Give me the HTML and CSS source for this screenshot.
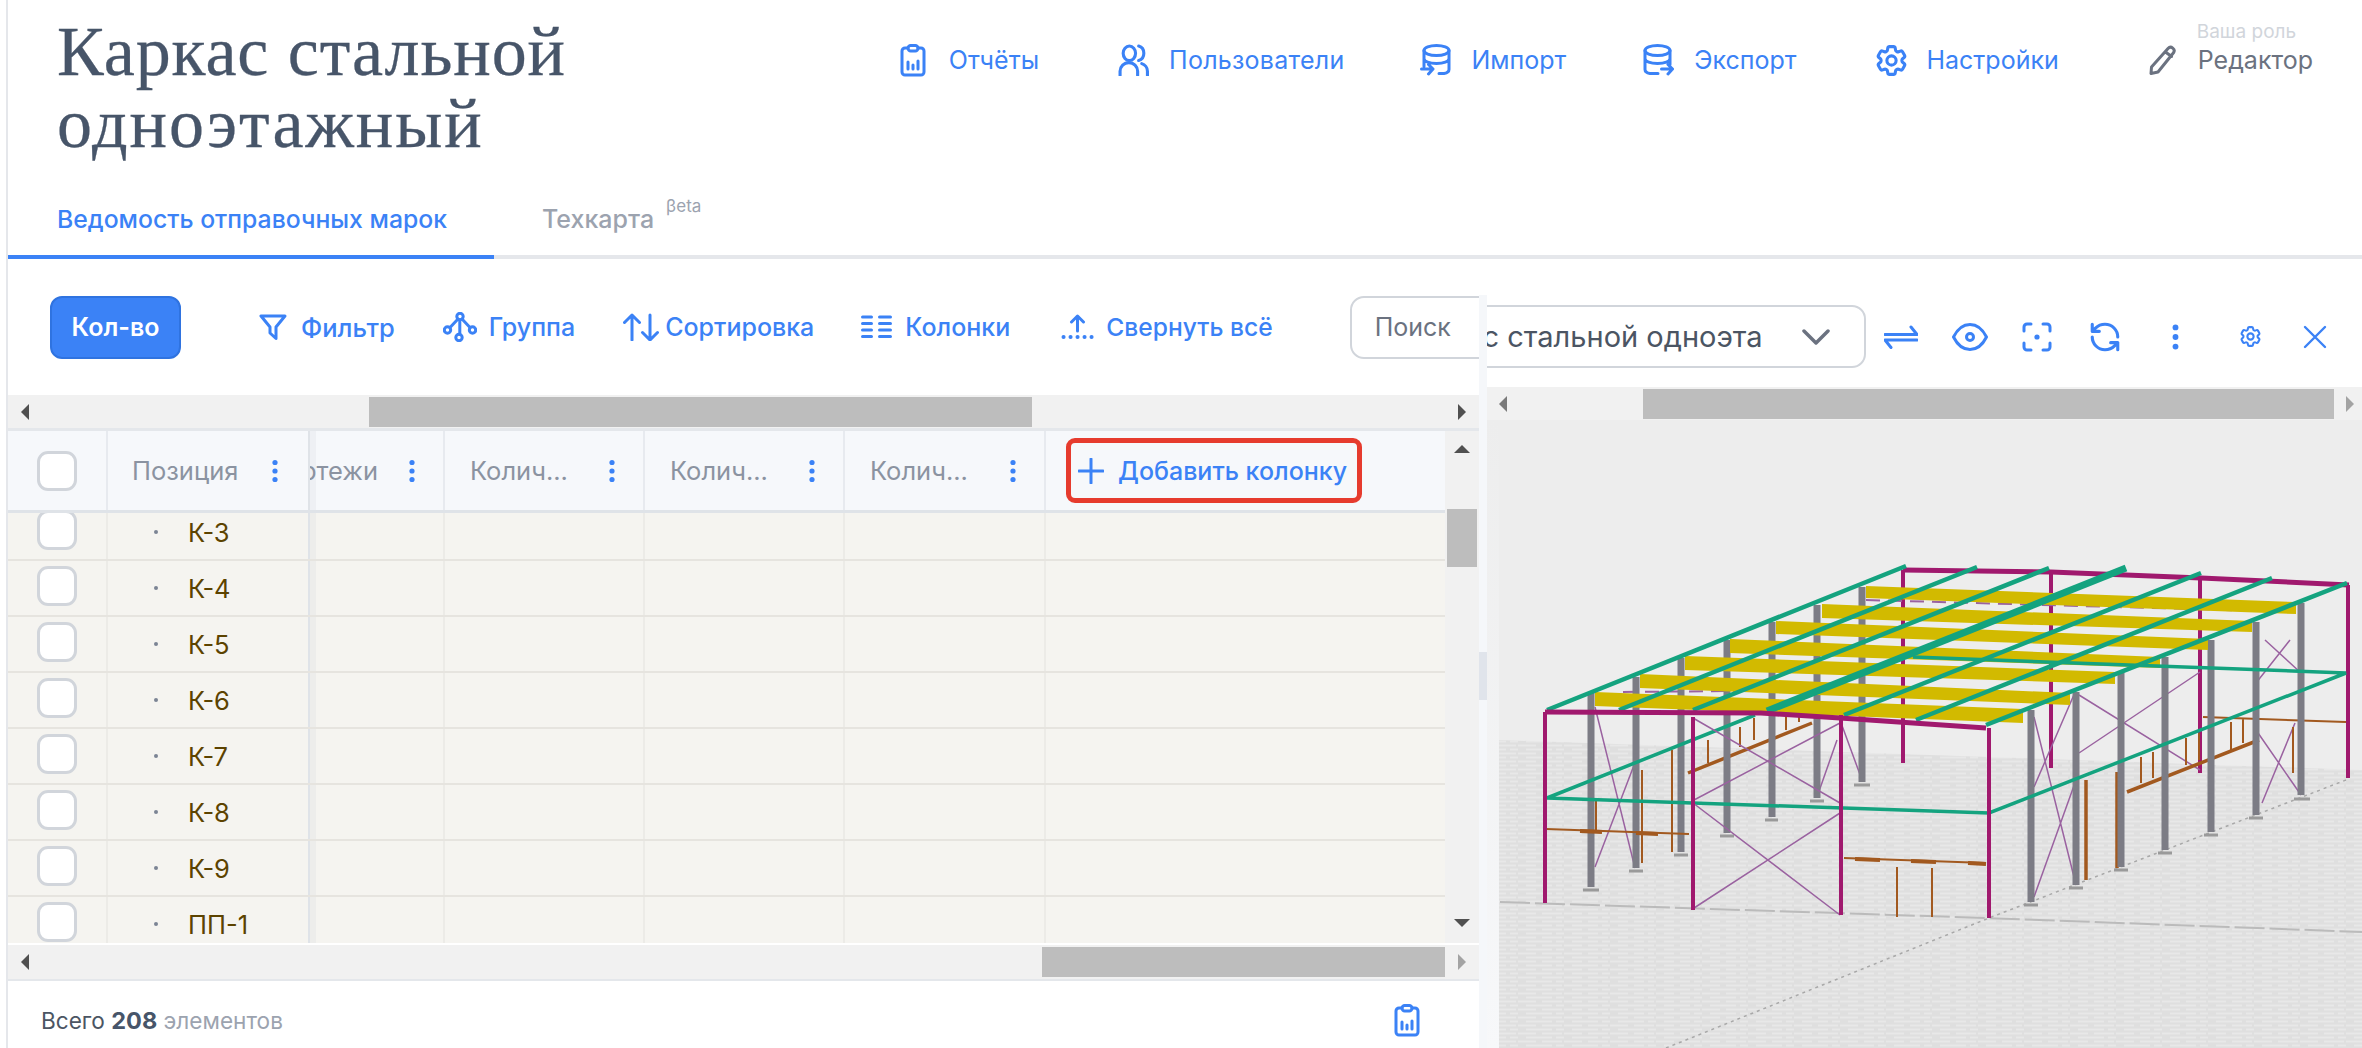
FILE: index.html
```html
<!DOCTYPE html>
<html lang="ru">
<head>
<meta charset="utf-8">
<title>Каркас стальной одноэтажный</title>
<link rel="stylesheet" href="styles.css">
</head>
<body>
<svg class="defs" width="0" height="0" aria-hidden="true">
  <symbol id="i-report" viewBox="0 0 26 33"><path d="M8 4H5a3 3 0 0 0-3 3v21a3 3 0 0 0 3 3h16a3 3 0 0 0 3-3V7a3 3 0 0 0-3-3h-3"/><rect x="8" y="1.5" width="10" height="5.5" rx="2.7"/><path d="M8 18v7M13 21v4M18 17v8"/></symbol>
  <symbol id="i-dots" viewBox="0 0 8 24"><circle cx="4" cy="3.5" r="2.6"/><circle cx="4" cy="12" r="2.6"/><circle cx="4" cy="20.5" r="2.6"/></symbol>
  <symbol id="i-gear" viewBox="0 0 24 24"><path d="M9.594 3.94c.09-.542.56-.94 1.11-.94h2.593c.55 0 1.02.398 1.11.94l.213 1.281c.063.374.313.686.645.87.074.04.147.083.22.127.324.196.72.257 1.075.124l1.217-.456a1.125 1.125 0 011.37.49l1.296 2.247a1.125 1.125 0 01-.26 1.431l-1.003.827c-.293.24-.438.613-.431.992a6.759 6.759 0 010 .255c-.007.378.138.75.43.99l1.005.828c.424.35.534.954.26 1.43l-1.298 2.247a1.125 1.125 0 01-1.369.491l-1.217-.456c-.355-.133-.75-.072-1.076.124a6.57 6.57 0 01-.22.128c-.331.183-.581.495-.644.869l-.213 1.28c-.09.543-.56.941-1.11.941h-2.594c-.55 0-1.02-.398-1.11-.94l-.213-1.281c-.062-.374-.312-.686-.644-.87a6.52 6.52 0 01-.22-.127c-.325-.196-.72-.257-1.076-.124l-1.217.456a1.125 1.125 0 01-1.369-.49l-1.297-2.247a1.125 1.125 0 01.26-1.431l1.004-.827c.292-.24.437-.613.43-.992a6.932 6.932 0 010-.255c.007-.378-.138-.75-.43-.99l-1.004-.828a1.125 1.125 0 01-.26-1.43l1.297-2.247a1.125 1.125 0 011.37-.491l1.216.456c.356.133.751.072 1.076-.124.072-.044.146-.087.22-.128.332-.183.582-.495.644-.869l.214-1.281z"/><circle cx="12" cy="12" r="3"/></symbol>
  <pattern id="floor" width="46" height="8" patternUnits="userSpaceOnUse"><rect width="46" height="8" fill="#dfdfdf"/><path d="M0 1.5h18M24 1.5h20M8 5.5h26M38 5.5h8" stroke="#e8e8e8" stroke-width="2"/></pattern>
</svg>

<div class="app">
  <header class="top">
    <h1 class="title">Каркас стальной <span class="title-line2">одноэтажный</span></h1>
    <nav class="mainnav">
      <a class="navitem nav-report"><svg class="ic ic-report"><use href="#i-report"/></svg>Отчёты</a>
      <a class="navitem nav-users"><svg class="ic ic-30" viewBox="0 0 30 30"><ellipse cx="11" cy="8.5" rx="6" ry="7"/><path d="M20 1.5c3 .8 5 3.6 5 7s-2 6.200-5 7M2 30v-4a8.500 8.500 0 0 1 17 0v4M23 18.500c3 1 5.500 4 5.500 7.500v4"/></svg>Пользователи</a>
      <a class="navitem nav-import"><svg class="ic ic-30" viewBox="0 0 30 32"><ellipse cx="16" cy="6.500" rx="12.500" ry="5"/><path d="M3.500 6.500v16M28.500 6.500v19c0 2-2 3.500-5 4h-5M3.500 14.500c0 3 5.500 5 12.500 5s12.500-2 12.500-5M1 25h11M8 20.500l4.500 4.500L8 30"/></svg>Импорт</a>
      <a class="navitem nav-export"><svg class="ic ic-30" viewBox="0 0 30 32"><ellipse cx="14" cy="6.500" rx="12.500" ry="5"/><path d="M26.500 6.500v14M1.500 6.500v19c0 2 2 3.500 5 4h8M1.500 14.500c0 3 5.500 5 12.500 5s12.500-2 12.500-5M18 25h11M24.500 20.500L29 25l-4.500 5"/></svg>Экспорт</a>
      <a class="navitem nav-settings"><svg class="ic ic-gear-lg"><use href="#i-gear"/></svg>Настройки</a>
      <div class="role">
        <svg class="ic ic-pencil" viewBox="0 0 28 30"><path d="M20 3.500a3.500 3.500 0 0 1 5.500 4.300L10 27l-7 1.500L3.500 22zM17.500 7l6 4.500"/></svg>
        <div class="role-text"><span class="role-label">Ваша роль</span><span class="role-name">Редактор</span></div>
      </div>
    </nav>
  </header>

  <div class="tabs">
    <a class="tab tab-active">Ведомость отправочных марок</a>
    <a class="tab tab-muted">Техкарта<sup class="beta">βeta</sup></a>
  </div>

  <div class="work">
    <section class="left">
      <div class="toolbar">
        <button class="primary">Кол-во</button>
        <div class="tools">
          <a class="tool tool-filter"><svg class="ic ic-filter" viewBox="0 0 28 28"><path d="M2 3h24l-9 11v11.500l-6-5.500v-6z"/></svg>Фильтр</a>
          <a class="tool"><svg class="ic ic-group" viewBox="0 0 34 30"><circle cx="17" cy="4.500" r="3.200"/><circle cx="4.500" cy="18" r="3.200"/><circle cx="29.500" cy="18" r="3.200"/><circle cx="16" cy="25.500" r="3.200"/><path d="M15 7L7 15.500M19 7l8 8.500M16.800 8v14"/></svg>Группа</a>
          <a class="tool tool-sort"><svg class="ic ic-sort" viewBox="0 0 36 28"><path d="M9 27V2M1.500 9.500L9 2l7.500 7.500M27 2v25M19.500 19.500L27 27l7.500-7.500"/></svg>Сортировка</a>
          <a class="tool"><svg class="ic ic-cols" viewBox="0 0 32 26"><path d="M2 3h9M2 9.500h9M2 16h9M2 22.500h9M19 3h11M19 9.500h11M19 16h11M19 22.500h11"/></svg>Колонки</a>
          <a class="tool tool-collapse"><svg class="ic ic-collapse" viewBox="0 0 32 26"><path d="M16 17V2M10 8l6-6 6 6"/><path class="dotrow" d="M2 23h.1M9 23h.1M16 23h.1M23 23h.1M30 23h.1"/></svg>Свернуть всё</a>
        </div>
        <div class="search">Поиск</div>
      </div>

      <div class="hbar hbar-top"><i class="arr arr-l"></i><div class="hspace hspace-a"></div><div class="hthumb hthumb-a"></div><div class="hspace"></div><i class="arr arr-r"></i></div>

      <div class="gridwrap">
        <div class="tbl">
          <div class="row head">
            <div class="cell cell-check"><span class="check"></span></div>
            <div class="cell cell-pos"><span class="hlabel">Позиция</span><svg class="kebab"><use href="#i-dots"/></svg></div>
            <div class="cell cell-clip"><span class="hlabel">Чертежи</span><svg class="kebab"><use href="#i-dots"/></svg></div>
            <div class="cell"><span class="hlabel">Колич...</span><svg class="kebab"><use href="#i-dots"/></svg></div>
            <div class="cell"><span class="hlabel">Колич...</span><svg class="kebab"><use href="#i-dots"/></svg></div>
            <div class="cell"><span class="hlabel">Колич...</span><svg class="kebab"><use href="#i-dots"/></svg></div>
            <div class="cell cell-add"><a class="addcol"><svg class="ic ic-plus" viewBox="0 0 26 26"><path d="M13 1v24M1 13h24"/></svg>Добавить колонку</a></div>
          </div>
          <div class="rows">
            <div class="rows-inner">
              <div class="row"><div class="cell cell-check"><span class="check"></span></div><div class="cell cell-pos"><i class="dot"></i><span class="mark">К-3</span></div><div class="cell cell-clip"></div><div class="cell"></div><div class="cell"></div><div class="cell"></div><div class="cell"></div></div>
              <div class="row"><div class="cell cell-check"><span class="check"></span></div><div class="cell cell-pos"><i class="dot"></i><span class="mark">К-4</span></div><div class="cell cell-clip"></div><div class="cell"></div><div class="cell"></div><div class="cell"></div><div class="cell"></div></div>
              <div class="row"><div class="cell cell-check"><span class="check"></span></div><div class="cell cell-pos"><i class="dot"></i><span class="mark">К-5</span></div><div class="cell cell-clip"></div><div class="cell"></div><div class="cell"></div><div class="cell"></div><div class="cell"></div></div>
              <div class="row"><div class="cell cell-check"><span class="check"></span></div><div class="cell cell-pos"><i class="dot"></i><span class="mark">К-6</span></div><div class="cell cell-clip"></div><div class="cell"></div><div class="cell"></div><div class="cell"></div><div class="cell"></div></div>
              <div class="row"><div class="cell cell-check"><span class="check"></span></div><div class="cell cell-pos"><i class="dot"></i><span class="mark">К-7</span></div><div class="cell cell-clip"></div><div class="cell"></div><div class="cell"></div><div class="cell"></div><div class="cell"></div></div>
              <div class="row"><div class="cell cell-check"><span class="check"></span></div><div class="cell cell-pos"><i class="dot"></i><span class="mark">К-8</span></div><div class="cell cell-clip"></div><div class="cell"></div><div class="cell"></div><div class="cell"></div><div class="cell"></div></div>
              <div class="row"><div class="cell cell-check"><span class="check"></span></div><div class="cell cell-pos"><i class="dot"></i><span class="mark">К-9</span></div><div class="cell cell-clip"></div><div class="cell"></div><div class="cell"></div><div class="cell"></div><div class="cell"></div></div>
              <div class="row"><div class="cell cell-check"><span class="check"></span></div><div class="cell cell-pos"><i class="dot"></i><span class="mark">ПП-1</span></div><div class="cell cell-clip"></div><div class="cell"></div><div class="cell"></div><div class="cell"></div><div class="cell"></div></div>
            </div>
          </div>
        </div>
        <div class="vbar"><i class="arr arr-u"></i><div class="vthumb"></div><i class="arr arr-d"></i></div>
      </div>

      <div class="hbar hbar-bottom"><i class="arr arr-l"></i><div class="hspace"></div><div class="hthumb hthumb-b"></div><i class="arr arr-r arr-off"></i></div>

      <footer class="foot">
        <div class="total">Всего <b>208</b> <span>элементов</span></div>
        <svg class="ic ic-report"><use href="#i-report"/></svg>
      </footer>
    </section>

    <div class="splitter"><span class="handle"></span></div>

    <section class="right">
      <div class="viewhead">
        <div class="select"><span class="select-text">Каркас стальной одноэтажный</span><svg class="chev" viewBox="0 0 28 16"><path d="M2 2l12 12L26 2"/></svg></div>
        <div class="vtools">
          <svg class="ic vt vt-swap" viewBox="0 0 34 24"><path d="M1 9.500h32L27 2M33 15H1l6 7.500"/></svg>
          <svg class="ic vt vt-eye" viewBox="0 0 36 28"><path d="M1.500 14C5.500 6 11.500 1.500 18 1.500S30.500 6 34.500 14c-4 8-10 12.500-16.500 12.500S5.500 22 1.500 14z"/><circle cx="18" cy="14" r="3.500"/></svg>
          <svg class="ic vt vt-focus" viewBox="0 0 30 30"><path d="M9 2H5a3 3 0 0 0-3 3v4M21 2h4a3 3 0 0 1 3 3v4M9 28H5a3 3 0 0 1-3-3v-4M21 28h4a3 3 0 0 0 3-3v-4"/><circle class="fill" cx="15" cy="15" r="2.600"/></svg>
          <svg class="ic vt vt-refresh" viewBox="0 0 24 24"><path d="M21 12a9 9 0 0 0-9-9 9.750 9.750 0 0 0-6.740 2.740L3 8M3 3v5h5M3 12a9 9 0 0 0 9 9 9.750 9.750 0 0 0 6.740-2.740L21 16M16 16h5v5"/></svg>
          <svg class="kebab vt vt-more"><use href="#i-dots"/></svg>
          <svg class="ic vt vt-gear"><use href="#i-gear"/></svg>
          <svg class="ic vt vt-close" viewBox="0 0 24 24"><path d="M2 2l20 20M22 2L2 22"/></svg>
        </div>
      </div>

      <div class="hbar hbar-view"><i class="arr arr-l arr-soft"></i><div class="hspace hspace-v"></div><div class="hthumb hthumb-v"></div><i class="arr arr-r arr-off"></i></div>

      <div class="viewer">
        <svg class="scene" viewBox="1487 420 875 628" width="875" height="628">
          <rect class="s-bg" x="1499" y="420" width="863" height="628"/>
          <path d="M1499 740L1930 755L2362 770V1048H1499z" fill="url(#floor)"/>
          <path class="s-ground" d="M1500 902L1986 918L2362 932"/>
          <path class="s-diag" d="M2346 780L1989 918L1666 1048"/>

          <g class="s-mag">
            <path class="b4" d="M1903 570L2051 572L2201 578L2349 585"/>
            <path d="M1903 570V763M2051 572V768M2200 578V773M2348 585V778"/>
          </g>
          <g class="s-brace">
            <path d="M2079 695L2200 770M2200 672L2079 753M2265 640L2301 673M2290 640L2256 683M2256 730L2301 795M2295 723L2262 803M1840 720L1862 780M1837 740L1817 797"/>
            <path d="M2034 717L2076 885M2076 690L2034 787M2076 780L2034 897M1595 707L1635 868M1636 760L1595 867"/>
            <path class="dash" d="M1623 692L1840 690L2070 700M1866 600L2296 612"/>
          </g>
          <g class="s-brown">
            <path d="M2203 717L2346 722M2293 727V773M1672 750V852M1642 770V863M1596 800V830M1694 747V770M1708 740V763M1740 727V747M1754 718V740M1786 713V730M1799 707V722M2141 757V783M2153 752V778M2186 738V765M2199 733V760M2231 722V750M2243 718V743"/>
            <path class="b3" d="M2117 772V868M2086 780V880M1688 773L1812 723M2127 792L2259 740"/>
          </g>
          <g class="s-gray">
            <path d="M1591 693V887M1636 677V868M1681 658V852M1727 640V833M1772 622V817M1817 605V798M1862 587V782M2031 710V902M2076 692V885M2121 673V867M2165 657V850M2211 640V832M2256 622V815M2301 603V795"/>
          </g>
          <g class="s-feet">
            <path d="M1583 890h16M1629 871h14M1674 855h14M1720 836h14M1765 820h13M1810 801h14M1854 785h16M2024 905h14M2069 888h14M2114 870h14M2158 853h14M2204 835h14M2249 818h14M2294 799h16"/>
          </g>
          <g class="s-yellow">
            <path d="M1595 692L2023 709V723L1595 706z"/>
            <path d="M1640 674L2070 693V705L1640 688z"/>
            <path d="M1685 656L2115 672V684L1685 670z"/>
            <path d="M1730 639L2160 657V668L1730 653z"/>
            <path d="M1776 621L2208 639V650L1776 634z"/>
            <path d="M1822 604L2252 621V632L1822 618z"/>
            <path d="M1866 586L2296 602V614L1866 598z"/>
          </g>
          <g class="s-green">
            <path d="M1906 566L1547 710M1977 567L1619 710M2049 568L1693 710M2201 573L1844 715M2272 578L1916 720M2347 583L1986 725"/>
            <path class="b5" d="M2126 568L1767 711"/>
            <path class="b2" d="M1913 657L2346 673L1989 813L1547 798L1755 715"/>
          </g>
          <g class="s-brace">
            <path d="M1693 803L1840 915M1840 813L1694 908M1693 718L1840 803M1840 723L1694 800"/>
          </g>
          <g class="s-brown">
            <path d="M1546 829L1689 834M1844 858L1986 863M1897 867V917M1932 868V917"/>
            <path class="b4" d="M1580 831L1602 832M1636 833L1658 834M1855 859L1880 860M1911 861L1936 862M1968 863L1986 864"/>
          </g>
          <g class="s-mag">
            <path class="b4" d="M1545 712L1761 713L1840 718L1986 728"/>
            <path d="M1545 712V903M1693 717V910M1841 715V915M1989 728V918"/>
          </g>
        </svg>
      </div>
    </section>
  </div>
</div>
</body>
</html>
```
FILE: styles.css
```css
* { box-sizing: border-box; }
html, body { margin: 0; padding: 0; }
body { width: 2362px; height: 1048px; overflow: hidden; background: #fff; font-family: "Inter", "Noto Sans", sans-serif; font-size: 25px; color: #4b5563; }
a { display: flex; align-items: center; text-decoration: none; }
.defs { position: absolute; }

.ic { fill: none; stroke: #3b82f6; stroke-width: 3; stroke-linecap: round; stroke-linejoin: round; flex: none; }
.kebab { width: 8px; height: 24px; fill: #3b82f6; flex: none; }

.app { margin-left: 6px; border-left: 2px solid #e5e7eb; height: 1048px; display: flex; flex-direction: column; }

.top { height: 170px; padding: 16px 0 0 49px; display: flex; justify-content: space-between; align-items: flex-start; }
.title { margin: 0; width: 560px; font-family: "Liberation Serif", serif; font-weight: 400; font-size: 70px; line-height: 72px; letter-spacing: 0.9px; color: #475569; -webkit-text-stroke: 0.3px #475569; }
.title-line2 { letter-spacing: 2px; }

.mainnav { display: flex; align-items: center; height: 60px; margin-top: 14px; }
.navitem { color: #3b82f6; gap: 20px; }
.ic-report { width: 26px; height: 33px; }
.ic-30 { width: 31px; height: 32px; }
.ic-gear-lg { width: 37px; height: 37px; stroke-width: 2; }
.nav-report { margin-right: 79px; gap: 23px; }
.nav-users { margin-right: 76px; letter-spacing: 0.25px; }
.nav-import { margin-right: 77px; }
.nav-export { margin-right: 77px; }
.nav-settings { margin-right: 89px; gap: 16px; }
.role { display: flex; align-items: center; gap: 22px; margin-right: 49px; position: relative; }
.ic-pencil { width: 28px; height: 30px; stroke: #6b7280; }
.role-text { display: flex; flex-direction: column; }
.role-label { position: absolute; left: 49px; top: -25px; font-size: 19px; color: #d1d5db; white-space: nowrap; }
.role-name { color: #6b7280; }

.tabs { height: 89px; border-bottom: 4px solid #e5e7eb; display: flex; }
.tab { height: 89px; padding-top: 12px; }
.tab-active { width: 486px; padding-left: 49px; color: #3b82f6; font-size: 24.75px; font-weight: 500; border-bottom: 4px solid #3b82f6; white-space: nowrap; }
.tab-muted { margin-left: 48px; color: #9ca3af; font-weight: 500; padding-top: 8px; }
.beta { font-size: 17px; font-weight: 400; margin-left: 12px; margin-top: -26px; align-self: center; }

.work { flex: 1; display: flex; min-height: 0; }
.left { width: 1471px; flex: none; display: flex; flex-direction: column; overflow: hidden; }

.toolbar { height: 136px; display: flex; align-items: center; padding-left: 42px; flex: none; }
.primary { width: 131px; height: 63px; background: #3b82f6; border: 2px solid #2f73e0; border-radius: 12px; color: #fff; font: 600 25px "Inter", sans-serif; flex: none; }
.tools { display: flex; align-items: center; gap: 48px; margin-left: 78px; color: #3b82f6; flex: none; font-weight: 500; }
.tool { gap: 12px; color: #3b82f6; }
.tool-filter { gap: 14px; font-size: 25.5px; }
.tool-sort { gap: 6px; margin-right: -2px; }
.tool-collapse { font-size: 24.6px; margin-left: 3px; }
.ic-filter { width: 28px; height: 28px; }
.ic-group { width: 34px; height: 30px; }
.ic-sort { width: 36px; height: 28px; }
.ic-cols { width: 33px; height: 26px; }
.ic-collapse { width: 33px; height: 26px; }
.dotrow { stroke-width: 4; }
.search { margin-left: 77px; width: 300px; height: 63px; border: 2px solid #d1d5db; border-radius: 14px; padding-left: 23px; display: flex; align-items: center; color: #6b7280; flex: none; }

.hbar { height: 34px; background: #f1f1f1; display: flex; align-items: center; flex: none; position: relative; }
.hbar-top { height: 36px; border-bottom: 3px solid #e4e7eb; align-items: flex-start; padding-top: 2px; }
.hbar-bottom { height: 36px; margin-top: 2px; border-bottom: 2px solid #e4e7eb; align-items: flex-start; padding-top: 2px; }
.hthumb { height: 30px; background: #bdbdbd; flex: none; }
.hspace { flex: 1; }
.hspace-a { flex: none; width: 327px; }
.hthumb-a { width: 663px; }
.hthumb-b { width: 403px; }
.arr { display: block; width: 0; height: 0; border-style: solid; border-color: transparent; flex: none; }
.arr-l { margin: 7px 0 0 13px; border-width: 8px 8px 8px 0; border-right-color: #505050; margin-right: 13px; }
.arr-r { margin: 7px 13px 0 13px; border-width: 8px 0 8px 8px; border-left-color: #505050; }
.arr-off { border-left-color: #a3a3a3; }
.arr-soft { border-right-color: #7a7a7a; }
.arr-u { border-width: 0 8px 8px 8px; border-bottom-color: #505050; margin: 14px auto 0; }
.arr-d { border-width: 8px 8px 0 8px; border-top-color: #505050; margin: auto auto 16px; }

.hbar-view { height: 33px; margin-top: 0; }
.hbar-view .arr-l { margin: 0 0 0 12px; }
.hbar-view .arr-r { margin: 0 8px 0 12px; }
.hspace-v { flex: none; width: 136px; }
.hthumb-v { width: 691px; }

.gridwrap { display: flex; height: 512px; flex: none; }
.tbl { width: 1437px; flex: none; display: flex; flex-direction: column; overflow: hidden; }
.vbar { flex: 1; background: #f1f1f1; display: flex; flex-direction: column; align-items: center; }
.vthumb { width: 30px; height: 58px; margin-top: 56px; background: #bdbdbd; flex: none; }

.row { display: grid; grid-template-columns: 100px 202px 135px 200px 200px 201px 399px; height: 56px; border-bottom: 2px solid #e6e4df; background: #f5f4f0; }
.head { height: 82px; background: #f6f8fb; border-bottom: 3px solid #dfe3e8; flex: none; }
.rows { flex: 1; overflow: hidden; min-height: 0; }
.rows-inner { margin-top: -8px; }
.cell { display: flex; align-items: center; border-right: 2px solid #ecebe7; min-width: 0; overflow: hidden; }
.head .cell { border-right-color: #e7eaef; padding-left: 25px; justify-content: space-between; padding-right: 27px; color: #8b93a1; }
.head .cell-pos { padding-left: 24px; padding-right: 29px; border-right-color: #dfe3e8; }
.head .cell-clip { padding: 0 27px 0 0; justify-content: flex-end; gap: 30px; }
.hlabel { white-space: nowrap; font-size: 25.5px; }
.cell-check { justify-content: center; padding-bottom: 4px; }
.head .cell-check { justify-content: center; padding: 0; }
.check { width: 40px; height: 40px; background: #fff; border: 3px solid #d1d5db; border-radius: 11px; flex: none; }
.cell-pos { border-right-color: #dfe3e8; padding-left: 46px; }
.cell-clip { background: linear-gradient(90deg, #ededeb 6px, transparent 6px); }
.head .cell-clip { background: linear-gradient(90deg, #eef0f4 6px, transparent 6px); }
.head .cell-add { border-right: 0; padding: 0 0 0 20px; justify-content: flex-start; }
.cell:last-child { border-right: 0; }
.dot { width: 4px; height: 4px; border-radius: 50%; background: #7b8494; margin-right: 30px; flex: none; }
.mark { color: #5c4300; font-size: 25.5px; }
.addcol { width: 296px; height: 65px; border: 5px solid #e63b2e; border-radius: 9px; padding-left: 7px; gap: 14px; color: #3b82f6; font-weight: 500; white-space: nowrap; overflow: hidden; flex: none; }
.ic-plus { width: 26px; height: 26px; }

.foot { flex: 1; display: flex; justify-content: space-between; align-items: center; padding: 11px 59px 0 33px; }
.total { font-size: 22.6px; color: #4b5563; }
.total b { font-weight: 700; color: #475569; font-size: 23.5px; }
.total span { color: #9ca3af; }

.splitter { width: 8px; flex: none; margin-top: 36px; background: #f5f7fa; display: flex; align-items: flex-start; }
.handle { width: 8px; height: 48px; margin-top: 357px; background: #e0e4eb; }

.right { flex: 1; display: flex; flex-direction: column; min-width: 0; overflow: hidden; }
.viewhead { height: 128px; display: flex; align-items: flex-start; flex: none; }
.select { margin: 46px 0 0 -110px; width: 489px; height: 63px; border: 2px solid #d1d5db; border-radius: 14px; padding-left: 18px; display: flex; align-items: center; flex: none; }
.select-text { width: 366px; overflow: hidden; white-space: nowrap; font-size: 29px; color: #4b5563; flex: none; }
.chev { width: 28px; height: 16px; margin-left: 39px; fill: none; stroke: #6b7280; stroke-width: 3.500; stroke-linecap: round; stroke-linejoin: round; flex: none; }
.vtools { display: flex; align-items: center; height: 63px; margin-top: 46px; }
.vt { flex: none; }
.vt-swap { width: 34px; height: 24px; margin-left: 18px; }
.vt-eye { width: 36px; height: 28px; margin-left: 34px; }
.vt-focus { width: 30px; height: 30px; margin-left: 34px; }
.vt-refresh { width: 34px; height: 34px; margin-left: 36px; stroke-width: 2.200; }
.vt-more { width: 9px; height: 28px; margin-left: 49px; }
.vt-gear { width: 25px; height: 25px; margin-left: 58px; stroke-width: 2; }
.vt-close { width: 24px; height: 24px; margin-left: 40px; stroke-width: 2.400; }

.viewer { flex: 1; background: linear-gradient(#ededed, #f7f8fa); }
.scene { display: block; }
.s-bg { fill: #ededed; }
.s-ground { fill: none; stroke: #bbbbbb; stroke-width: 2; stroke-dasharray: 30 5; }
.s-diag { fill: none; stroke: #a8a8a8; stroke-width: 1.500; stroke-dasharray: 3 4; }
.s-mag { fill: none; stroke: #a0196e; stroke-width: 4; }
.s-mag .b4 { stroke-width: 5; }
.s-brace { fill: none; stroke: #9a62a0; stroke-width: 1.500; }
.s-brace .dash { stroke-dasharray: 14 8; stroke-width: 2; }
.s-brown { fill: none; stroke: #a2591f; stroke-width: 2; }
.s-brown .b3 { stroke-width: 3.500; }
.s-brown .b4 { stroke-width: 4; }
.s-gray { fill: none; stroke: #7c7c85; stroke-width: 7; }
.s-feet { fill: none; stroke: #9a9a9a; stroke-width: 3; }
.s-yellow { fill: #d2ba00; }
.s-green { fill: none; stroke: #14a37f; stroke-width: 4.500; }
.s-green .b5 { stroke-width: 7; }
.s-green .b2 { stroke-width: 3.500; }
.fill { fill: #3b82f6; stroke: none; }
```
